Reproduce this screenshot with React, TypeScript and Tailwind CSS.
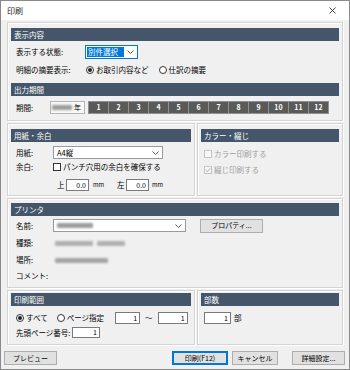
import React from "react";

function Header({ children }: { children: React.ReactNode }) {
  return (
    <div className="h-[13px] shrink-0 bg-[#45566a] text-white text-[7.5px] leading-[13px] pl-[3px]">
      {children}
    </div>
  );
}

function Box({ className, children }: { className: string; children: React.ReactNode }) {
  return (
    <div
      className={
        "border border-[#d4d4d4] shadow-[inset_1px_1px_0_#ffffff,1px_1px_0_#ffffff] flex flex-col " +
        className
      }
    >
      {children}
    </div>
  );
}

function Chevron() {
  return (
    <svg width="7" height="4" viewBox="0 0 7 4" className="shrink-0">
      <path d="M0.5 0.5 L3.5 3.5 L6.5 0.5" fill="none" stroke="#444" strokeWidth="0.9" />
    </svg>
  );
}

function Radio({ on }: { on?: boolean }) {
  return (
    <span className="w-[8px] h-[8px] rounded-full border border-[#333] bg-white flex items-center justify-center shrink-0">
      {on ? <span className="w-[4px] h-[4px] rounded-full bg-[#222]" /> : null}
    </span>
  );
}

function Blur({ className }: { className: string }) {
  return <span className={"inline-block h-[5px] bg-[#9c9c9c] blur-[1px] rounded-[1px] " + className} />;
}

function NumInput({ className, value }: { className: string; value: string }) {
  return (
    <div
      className={
        "border border-[#7a7a7a] bg-white flex items-center justify-end pr-[2px] text-[7px] " + className
      }
    >
      {value}
    </div>
  );
}

function Btn({ className, children, primary }: { className: string; children: React.ReactNode; primary?: boolean }) {
  return (
    <div
      className={
        "h-[14px] bg-[#e1e1e1] flex items-center justify-center text-[7px] " +
        (primary ? "border border-[#0078d7] shadow-[inset_0_0_0_1px_#0078d7] " : "border border-[#adadad] ") +
        className
      }
    >
      {children}
    </div>
  );
}

export default function App() {
  const months = ["1", "2", "3", "4", "5", "6", "7", "8", "9", "10", "11", "12"];
  return (
    <div className="w-[350px] h-[370px] border border-[#8a8a8a] bg-[#f0f0f0] flex flex-col text-[7.5px] text-[#000] leading-none font-['Noto_Sans_CJK_JP','Noto_Sans',sans-serif] overflow-hidden">
      {/* title bar */}
      <div className="h-[19px] shrink-0 bg-white flex items-center justify-between pl-[6px] pr-[13px]">
        <span className="text-[8px] text-[#222]">印刷</span>
        <svg width="7" height="7" viewBox="0 0 7 7">
          <path d="M0.5 0.5 L6.5 6.5 M6.5 0.5 L0.5 6.5" stroke="#333" strokeWidth="0.9" />
        </svg>
      </div>

      <div className="px-[6px] pt-[2px] flex flex-col gap-[2px]">
        {/* box 1 */}
        <Box className="h-[99px] px-[3px] pt-[5px]">
          <Header>表示内容</Header>
          <div className="mt-[4px] h-[14px] flex items-center">
            <span className="w-[74px] pl-[5px]">表示する状態:</span>
            <div className="w-[53px] h-[14px] border border-[#0078d7] bg-white flex items-center pl-[1px] pr-[3px] gap-[3px]">
              <span className="flex-1 h-[10px] bg-[#0078d7] text-white text-[7.5px] leading-[10px] pl-[1px]">
                別件選択
              </span>
              <Chevron />
            </div>
          </div>
          <div className="mt-[5px] h-[12px] flex items-center">
            <span className="w-[75px] pl-[5px]">明細の摘要表示:</span>
            <Radio on />
            <span className="ml-[2px]">お取引内容など</span>
            <span className="ml-[10px]">
              <Radio />
            </span>
            <span className="ml-[2px]">仕訳の摘要</span>
          </div>
          <div className="mt-[7px]">
            <Header>出力期間</Header>
          </div>
          <div className="mt-[5px] h-[13px] flex items-center">
            <span className="w-[39px] pl-[5px]">期間:</span>
            <div className="w-[35px] h-[13px] border border-[#b5b5b5] bg-[#f8f8f8] flex items-center justify-end pr-[3px] gap-[2px]">
              <Blur className="w-[20px]" />
              <span className="text-[7px]">年</span>
            </div>
            <div className="ml-[3px] flex bg-[#909090] p-[1px] gap-[1px]">
              {months.map((m) => (
                <div
                  key={m}
                  className="w-[19px] h-[11px] bg-[#5a5a5a] text-white font-bold text-[7px] flex items-center justify-center"
                >
                  {m}
                </div>
              ))}
            </div>
          </div>
        </Box>

        {/* box row 2 */}
        <div className="flex gap-[2px]">
          <Box className="w-[188px] h-[73px] px-[3px] pt-[5px]">
            <Header>用紙・余白</Header>
            <div className="mt-[4px] h-[13px] flex items-center">
              <span className="w-[42px] pl-[5px]">用紙:</span>
              <div className="w-[110px] h-[13px] border border-[#9a9a9a] bg-white flex items-center justify-between pl-[3px] pr-[3px]">
                <span>A4縦</span>
                <Chevron />
              </div>
            </div>
            <div className="mt-[3px] h-[10px] flex items-center">
              <span className="w-[42px] pl-[5px]">余白:</span>
              <span className="w-[8px] h-[8px] border border-[#333] bg-white shrink-0" />
              <span className="ml-[2px]">パンチ穴用の余白を確保する</span>
            </div>
            <div className="mt-[7px] h-[12px] flex items-center">
              <span className="ml-[46px] w-[9px]">上</span>
              <NumInput className="w-[23px] h-[12px]" value="0.0" />
              <span className="ml-[4px] text-[6px] w-[24px]">mm</span>
              <span className="w-[9px]">左</span>
              <NumInput className="w-[23px] h-[12px]" value="0.0" />
              <span className="ml-[3px] text-[6px]">mm</span>
            </div>
          </Box>
          <Box className="flex-1 h-[73px] px-[3px] pt-[5px]">
            <Header>カラー・綴じ</Header>
            <div className="mt-[7px] h-[9px] flex items-center pl-[3px] text-[#a0a0a0]">
              <span className="w-[8px] h-[8px] border border-[#c4c4c4] bg-[#f7f7f7] shrink-0" />
              <span className="ml-[2px]">カラー印刷する</span>
            </div>
            <div className="mt-[7px] h-[9px] flex items-center pl-[3px] text-[#a0a0a0]">
              <span className="w-[8px] h-[8px] border border-[#c4c4c4] bg-[#f7f7f7] shrink-0 flex items-center justify-center">
                <svg width="6" height="6" viewBox="0 0 6 6">
                  <path d="M0.6 3 L2.3 4.7 L5.4 1.2" fill="none" stroke="#a8a8a8" strokeWidth="0.9" />
                </svg>
              </span>
              <span className="ml-[2px]">綴じ印刷する</span>
            </div>
          </Box>
        </div>

        {/* box 3 */}
        <Box className="h-[90px] px-[3px] pt-[4px]">
          <Header>プリンタ</Header>
          <div className="mt-[3px] h-[13px] flex items-center">
            <span className="w-[42px] pl-[5px]">名前:</span>
            <div className="w-[133px] h-[13px] border border-[#9a9a9a] bg-white flex items-center justify-between pl-[3px] pr-[3px]">
              <Blur className="w-[36px]" />
              <Chevron />
            </div>
            <Btn className="ml-[14px] w-[63px] h-[13px]">プロパティ...</Btn>
          </div>
          <div className="mt-[5px] h-[12px] flex items-center">
            <span className="w-[44px] pl-[5px]">種類:</span>
            <Blur className="w-[38px] bg-[#b0b0b0]" />
            <Blur className="ml-[4px] w-[28px] bg-[#b0b0b0]" />
          </div>
          <div className="mt-[5px] h-[12px] flex items-center">
            <span className="w-[44px] pl-[5px]">場所:</span>
            <Blur className="w-[53px] bg-[#a4a4a4]" />
          </div>
          <div className="mt-[4px] h-[12px] flex items-center">
            <span className="pl-[5px]">コメント:</span>
          </div>
        </Box>

        {/* box row 4 */}
        <div className="flex gap-[2px]">
          <Box className="w-[188px] h-[55px] px-[3px] pt-[2px]">
            <Header>印刷範囲</Header>
            <div className="mt-[6px] h-[12px] flex items-center pl-[5px]">
              <Radio on />
              <span className="ml-[2px]">すべて</span>
              <span className="ml-[9px]">
                <Radio />
              </span>
              <span className="ml-[2px]">ページ指定</span>
              <NumInput className="ml-[11px] w-[25px] h-[12px]" value="1" />
              <span className="mx-[5px]">～</span>
              <NumInput className="w-[30px] h-[12px]" value="1" />
            </div>
            <div className="mt-[3px] h-[11px] flex items-center pl-[5px]">
              <span className="w-[56px]">先頭ページ番号:</span>
              <NumInput className="w-[28px] h-[11px]" value="1" />
            </div>
          </Box>
          <Box className="flex-1 h-[55px] px-[3px] pt-[2px]">
            <Header>部数</Header>
            <div className="mt-[6px] h-[12px] flex items-center pl-[3px]">
              <NumInput className="w-[27px] h-[12px]" value="1" />
              <span className="ml-[3px]">部</span>
            </div>
          </Box>
        </div>
      </div>

      {/* buttons */}
      <div className="mt-[6px] flex pl-[3px]">
        <Btn className="w-[53px]">プレビュー</Btn>
        <Btn className="ml-[115px] w-[56px]" primary>
          印刷(F12)
        </Btn>
        <Btn className="ml-[4px] w-[46px]">キャンセル</Btn>
        <Btn className="ml-[14px] w-[53px]">詳細設定...</Btn>
      </div>
    </div>
  );
}
